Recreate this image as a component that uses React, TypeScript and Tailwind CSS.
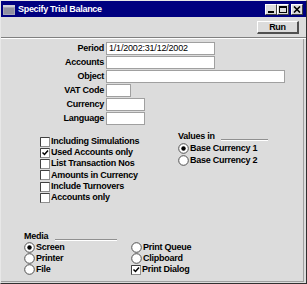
import React from 'react';

const Field = ({ label, width, value }: { label: string; width: string; value?: string }) => (
    <div className="flex h-[14px] items-start">
        <div className="w-[103px] text-right leading-[13px]">{label}</div>
        <div className={`ml-[2px] h-[13px] ${width} border border-[#a0a0a0] bg-white px-[2px] text-[9px] font-normal leading-[11px] tracking-[-0.2px]`}>
            {value}
        </div>
    </div>
);

const CheckBox = ({ checked }: { checked?: boolean }) => (
    <svg width="10" height="10" viewBox="0 0 10 10" className="shrink-0">
        <rect x="0.5" y="0.5" width="9" height="9" fill="#fff" stroke="#909090" />
        <path d="M0.5 9.5V0.5H9.5" fill="none" stroke="#404040" />
        {checked && <path d="M2.5 4.5l2 2 3.5-4" fill="none" stroke="#000" strokeWidth="1.5" />}
    </svg>
);

const Radio = ({ checked }: { checked?: boolean }) => (
    <svg width="11" height="11" viewBox="0 0 11 11" className="shrink-0">
        <circle cx="5.5" cy="5.5" r="4.8" fill="#fff" stroke="#505050" />
        {checked && <circle cx="5.5" cy="5.5" r="2.2" fill="#000" />}
    </svg>
);

const Check = ({ label, checked, h = 'h-[11px]' }: { label: string; checked?: boolean; h?: string }) => (
    <div className={`flex ${h} items-center gap-[1px]`}>
        <CheckBox checked={checked} />
        <span>{label}</span>
    </div>
);

const Opt = ({ label, checked }: { label: string; checked?: boolean }) => (
    <div className="flex h-[11px] items-center gap-[1px]">
        <Radio checked={checked} />
        <span>{label}</span>
    </div>
);

const TitleButton = ({ children, className = '' }: { children: React.ReactNode; className?: string }) => (
    <div className={`flex h-[11px] w-[12px] items-center justify-center border-t border-l border-white border-r border-b border-r-[#404040] border-b-[#404040] bg-[#dcdcdc] ${className}`}>
        {children}
    </div>
);

export default function App() {
    return (
        <div className="h-[284px] w-[307px] bg-white">
            <div className="flex h-[284px] w-[307px] flex-col border-t border-l border-r border-b border-t-[#e8e8e8] border-l-[#e8e8e8] border-r-[#303030] border-b-[#303030] bg-[#dcdcdc] text-[9px] font-bold leading-[11px] tracking-[-0.25px] text-black font-['Liberation_Sans',Arial,sans-serif]">
                {/* title bar */}
                <div className="flex h-[16px] items-center bg-[#000080] pl-[2px] pr-[3px]">
                    <svg width="12" height="10" viewBox="0 0 12 10" className="mt-[1px]">
                        <rect x="0" y="0" width="12" height="10" fill="#a8a8b8" />
                        <rect x="0" y="0" width="12" height="2" fill="#d0d0d8" />
                        <rect x="1" y="3" width="10" height="6" fill="#9090a0" />
                    </svg>
                    <span className="ml-[3px] text-[9px] tracking-[-0.3px] text-white">Specify Trial Balance</span>
                    <div className="ml-auto flex items-center">
                        <TitleButton>
                            <div className="mt-[5px] h-[2px] w-[6px] bg-black" />
                        </TitleButton>
                        <TitleButton>
                            <div className="h-[7px] w-[8px] border border-t-2 border-black" />
                        </TitleButton>
                        <TitleButton className="ml-[2px]">
                            <svg width="8" height="7" viewBox="0 0 8 7">
                                <path d="M1 0.5l6 6M7 0.5l-6 6" stroke="#000" strokeWidth="1.6" />
                            </svg>
                        </TitleButton>
                    </div>
                </div>

                {/* toolbar */}
                <div className="flex h-[20px] justify-end pt-[4px] pr-[7px]">
                    <div className="flex h-[13px] w-[42px] items-center justify-center border-t border-l border-white border-r-2 border-b-2 border-r-[#505050] border-b-[#505050] bg-[#dcdcdc]">
                        Run
                    </div>
                </div>
                <div className="h-[1px] bg-[#808080]" />
                <div className="h-[1px] bg-white" />

                {/* main panel */}
                <div className="mr-[2px] mb-[1px] flex flex-1 flex-col border-r border-b border-[#a0a0a0] pt-[3px]">
                    <Field label="Period" width="w-[109px]" value="1/1/2002:31/12/2002" />
                    <Field label="Accounts" width="w-[109px]" />
                    <Field label="Object" width="w-[179px]" />
                    <Field label="VAT Code" width="w-[25px]" />
                    <Field label="Currency" width="w-[39px]" />
                    <Field label="Language" width="w-[39px]" />

                    <div className="mt-[5px] flex">
                        <div className="ml-[39px] flex w-[138px] flex-col pt-[5px]">
                            <Check label="Including Simulations" />
                            <Check label="Used Accounts only" checked />
                            <Check label="List Transaction Nos" />
                            <Check label="Amounts in Currency" h="h-[12px]" />
                            <Check label="Include Turnovers" />
                            <Check label="Accounts only" />
                        </div>
                        <div className="flex flex-col">
                            <div className="flex h-[11px] items-center">
                                <span>Values in</span>
                                <div className="ml-[6px] mt-[7px] w-[47px] border-t border-b border-t-[#909090] border-b-white" />
                            </div>
                            <div className="flex h-[12px] items-center gap-[1px]">
                                <Radio checked />
                                <span>Base Currency 1</span>
                            </div>
                            <div className="flex h-[12px] items-center gap-[1px]">
                                <Radio />
                                <span>Base Currency 2</span>
                            </div>
                        </div>
                    </div>

                    <div className="mt-[27px] ml-[23px] flex flex-col">
                        <div className="flex h-[12px] items-center">
                            <span>Media</span>
                            <div className="ml-[7px] mt-[7px] w-[62px] border-t border-b border-t-[#909090] border-b-white" />
                        </div>
                        <div className="flex">
                            <div className="flex w-[107px] flex-col">
                                <Opt label="Screen" checked />
                                <Opt label="Printer" />
                                <Opt label="File" />
                            </div>
                            <div className="flex flex-col">
                                <Opt label="Print Queue" />
                                <Opt label="Clipboard" />
                                <Check label="Print Dialog" checked />
                            </div>
                        </div>
                    </div>
                </div>
            </div>
        </div>
    );
}
